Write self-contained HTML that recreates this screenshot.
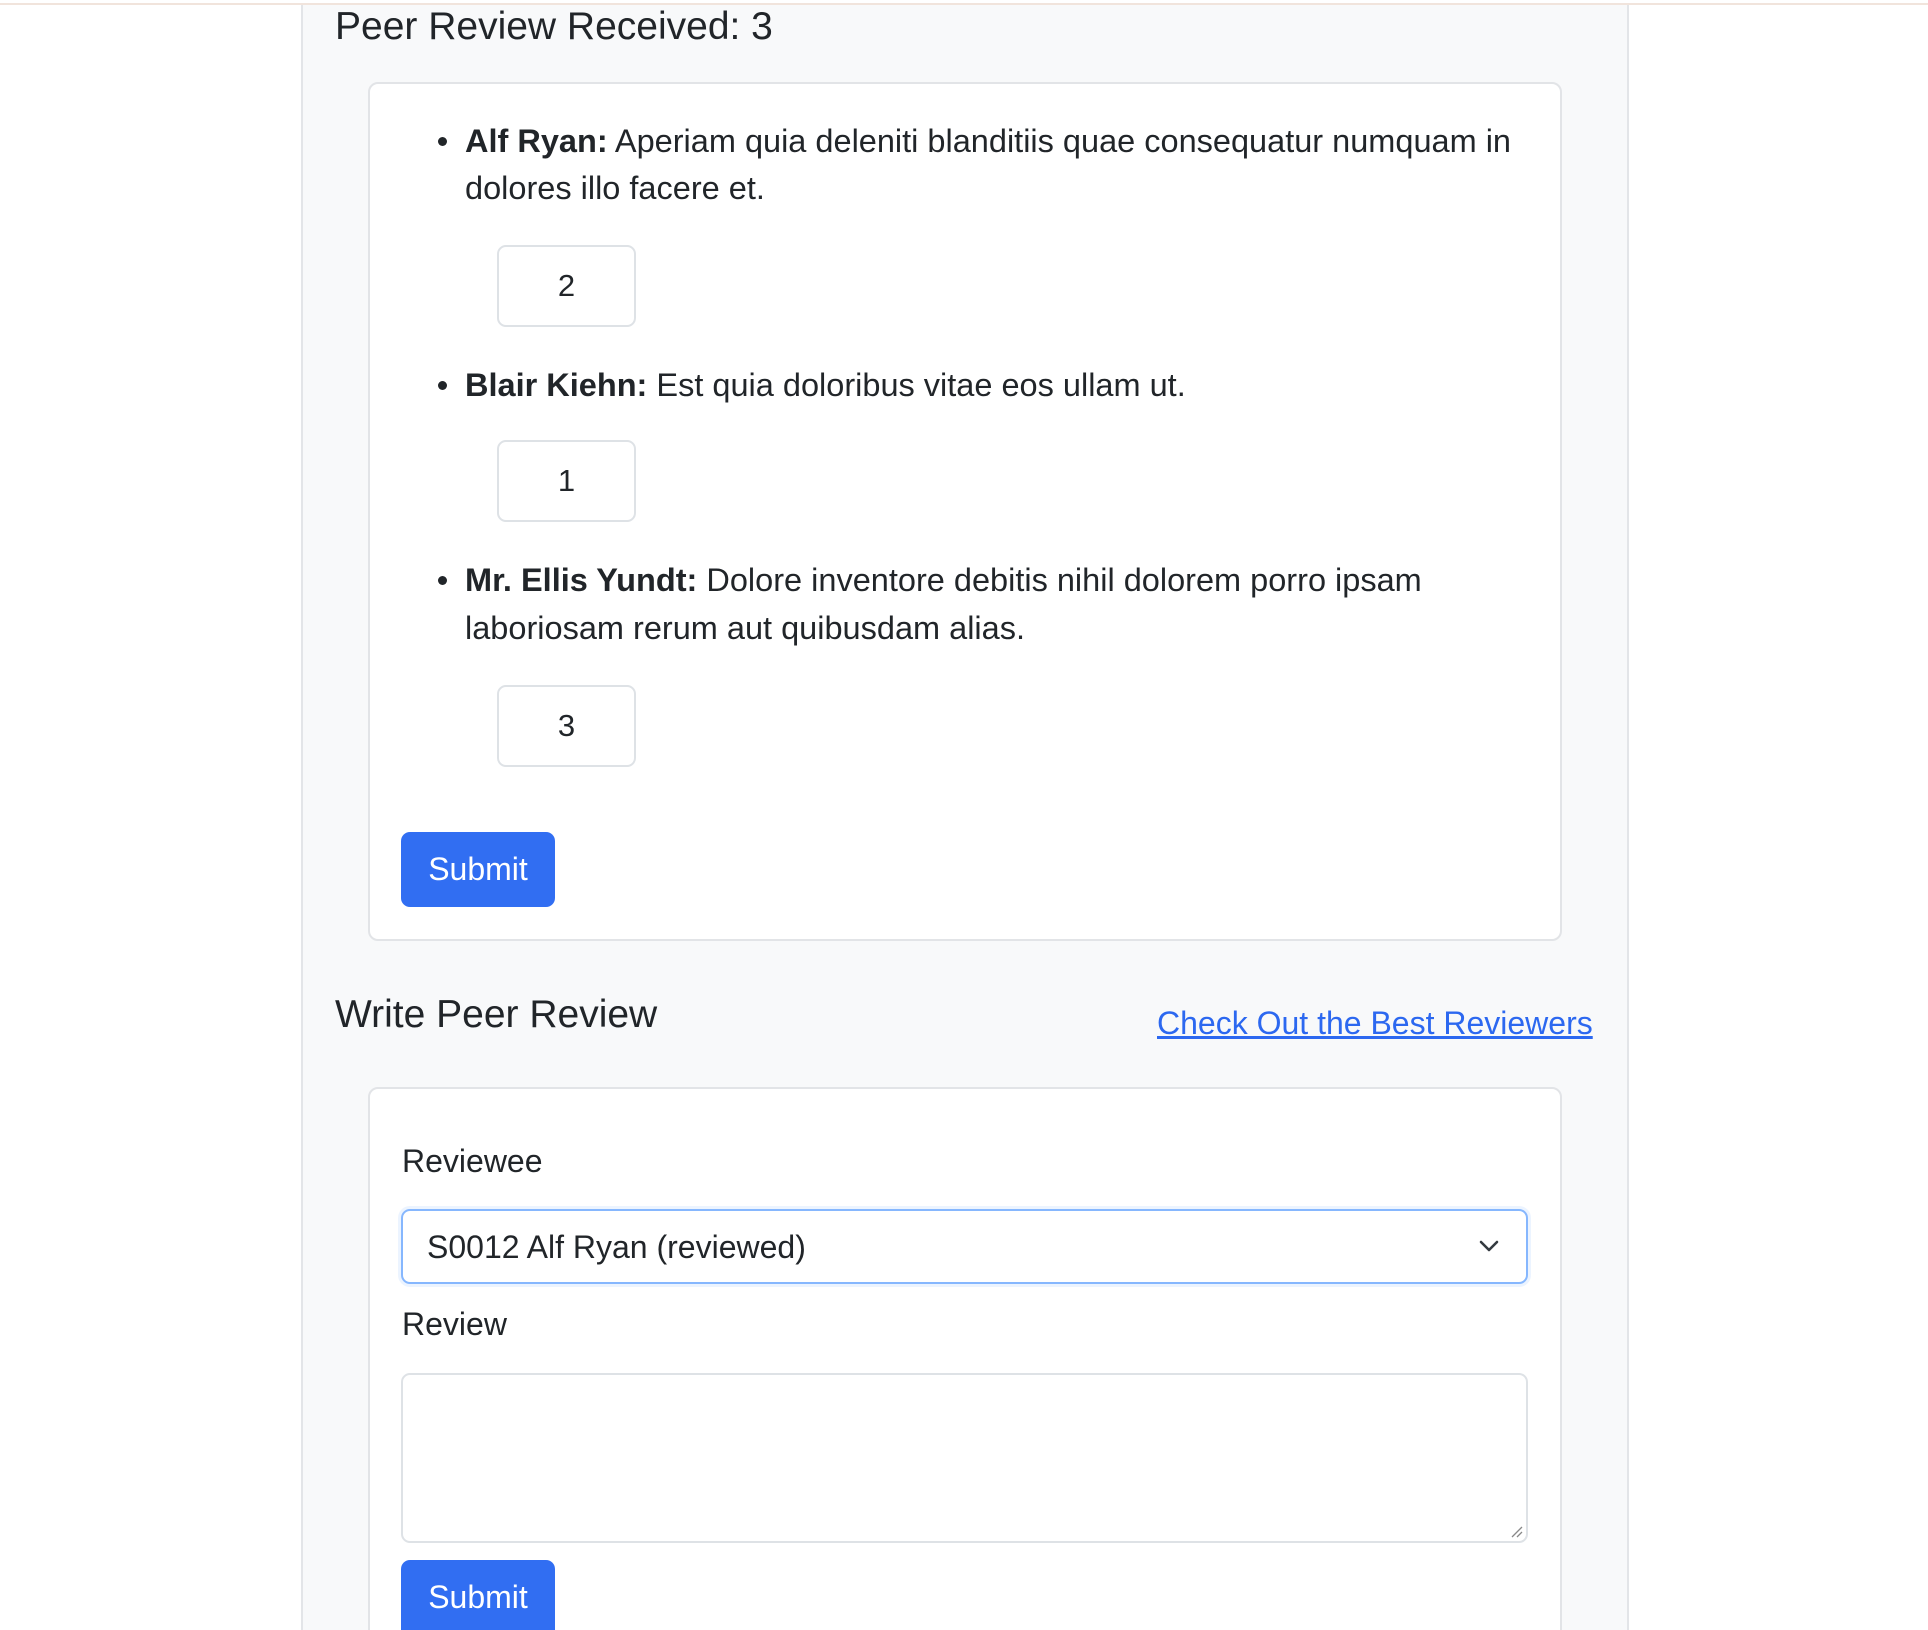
<!DOCTYPE html>
<html><head><meta charset="utf-8"><style>
*{box-sizing:border-box;margin:0;padding:0}
html,body{width:1928px;height:1630px;overflow:hidden}
body{background:#fff;font-family:"Liberation Sans",sans-serif;color:#212529;position:relative}
.topline{position:absolute;left:0;top:0;width:1928px;height:5px;border-bottom:2px solid #f1e4dc;}
.cont{position:absolute;left:301px;top:5px;width:1328px;height:1625px;background:#f8f9fa;border-left:2px solid #e3e5e8;border-right:2px solid #e3e5e8}
.abs{position:absolute}
h3{position:absolute;font-weight:400;font-size:39px;line-height:46px;white-space:nowrap}
.card{position:absolute;left:368px;width:1194px;background:#fff;border:2px solid #e2e4e7;border-radius:10px}
.txt{position:absolute;left:465px;font-size:32.5px;line-height:48px;white-space:nowrap}
.txt b{font-weight:700}
.dot{position:absolute;left:438px;width:9px;height:9px;border-radius:50%;background:#212529}
.num{position:absolute;left:497px;width:139px;height:82px;border:2px solid #dee2e6;border-radius:9px;background:#fff;font-size:31px;text-align:center;line-height:78px}
.btn{position:absolute;left:401px;width:154px;height:75px;background:#316ef2;border-radius:9px;color:#fff;font-size:32px;text-align:center;line-height:75px}
.lbl{position:absolute;left:402px;font-size:32px;line-height:40px}
</style></head><body>
<div class="topline"></div>
<div class="cont"></div>
<h3 style="left:335px;top:4px">Peer Review Received: 3</h3>
<div class="card" style="top:82px;height:859px"></div>
<div class="dot" style="top:137px"></div>
<div class="txt" style="top:117px"><b>Alf Ryan:</b> Aperiam quia deleniti blanditiis quae consequatur numquam in</div>
<div class="txt" style="top:164px">dolores illo facere et.</div>
<div class="num" style="top:245px">2</div>
<div class="dot" style="top:381px"></div>
<div class="txt" style="top:361px"><b>Blair Kiehn:</b> Est quia doloribus vitae eos ullam ut.</div>
<div class="num" style="top:440px">1</div>
<div class="dot" style="top:576px"></div>
<div class="txt" style="top:556px"><b>Mr. Ellis Yundt:</b> Dolore inventore debitis nihil dolorem porro ipsam</div>
<div class="txt" style="top:604px">laboriosam rerum aut quibusdam alias.</div>
<div class="num" style="top:685px">3</div>
<div class="btn" style="top:832px">Submit</div>
<h3 style="left:335px;top:992px">Write Peer Review</h3>
<div class="abs" style="left:1157px;top:1003px;font-size:32px;line-height:40px;color:#2c68f0;text-decoration:underline;white-space:nowrap">Check Out the Best Reviewers</div>
<div class="card" style="top:1087px;height:600px"></div>
<div class="lbl" style="top:1141px">Reviewee</div>
<div class="abs" style="left:401px;top:1209px;width:1127px;height:75px;border:2px solid #86b7fe;border-radius:9px;background:#fff;box-shadow:0 0 0 3px rgba(13,110,253,0.08)">
<div class="abs" style="left:24px;top:16px;font-size:32px;line-height:40px;white-space:nowrap">S0012 Alf Ryan (reviewed)</div>
<svg class="abs" style="left:1076px;top:28px" width="20" height="14" viewBox="0 0 20 14"><path d="M2 3 L10 11 L18 3" fill="none" stroke="#343a40" stroke-width="2.6" stroke-linecap="round" stroke-linejoin="round"/></svg>
</div>
<div class="lbl" style="top:1304px">Review</div>
<div class="abs" style="left:401px;top:1373px;width:1127px;height:170px;border:2px solid #dee2e6;border-radius:9px;background:#fff">
<svg class="abs" style="right:3px;bottom:3px" width="14" height="14"><path d="M3 13 L13 3 M8 13 L13 8" stroke="#888" stroke-width="1.3"/></svg>
</div>
<div class="btn" style="top:1560px;height:90px;line-height:75px">Submit</div>
</body></html>
